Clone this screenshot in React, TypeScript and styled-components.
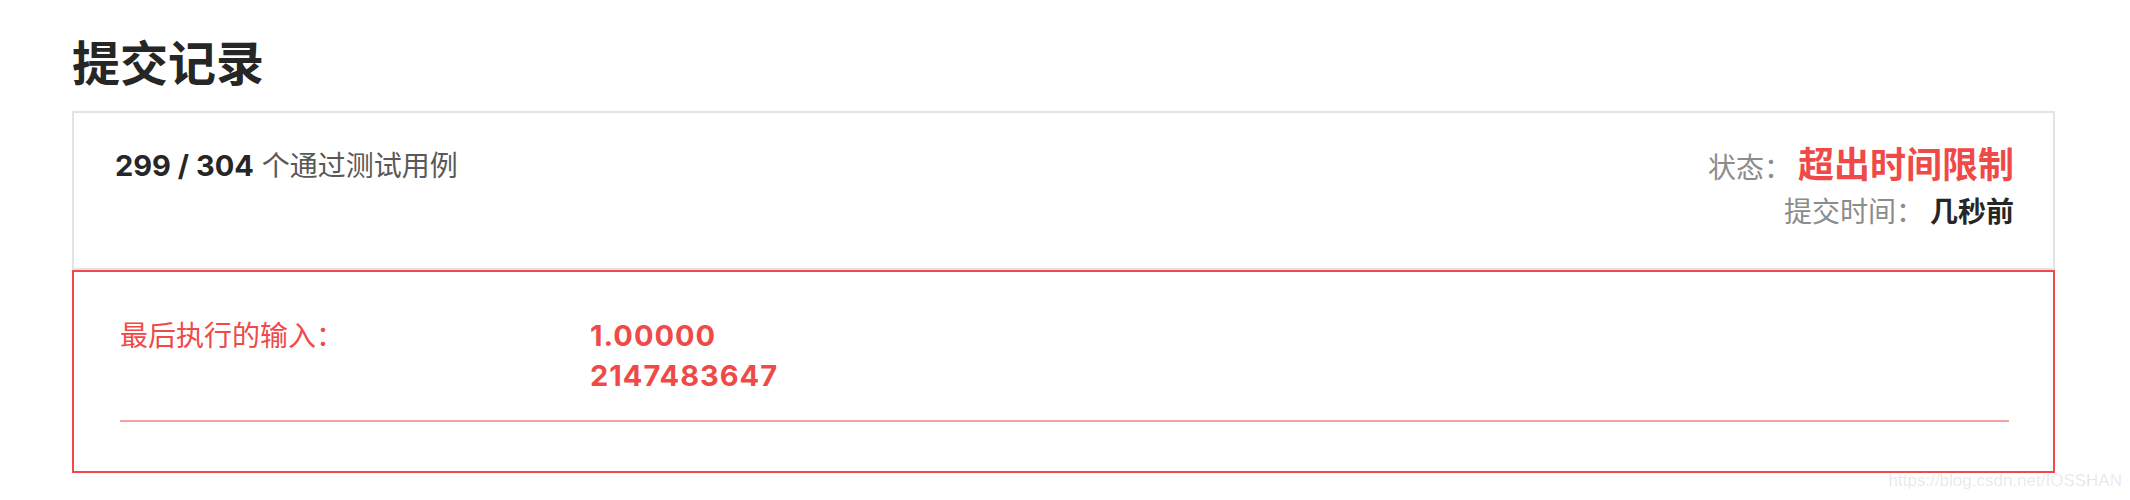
import React from "react";
import styled, { createGlobalStyle } from "styled-components";

const GlobalStyle = createGlobalStyle`
  body {
    margin: 0;
    background: #ffffff;
    font-family: "Inter", "Noto Sans CJK SC", sans-serif;
  }
`;

const RED = "#f04a48";

const App: React.FC = () => {
  return (
    <Page>
      <GlobalStyle />
      <Title>提交记录</Title>
      <SummaryCard>
        <Passed>
          <Count>299 / 304</Count> 个通过测试用例
        </Passed>
        <StatusColumn>
          <StatusLine>
            <Label>状态：</Label>
            <StatusValue>超出时间限制</StatusValue>
          </StatusLine>
          <TimeLine>
            <Label>提交时间：</Label>
            <TimeValue>几秒前</TimeValue>
          </TimeLine>
        </StatusColumn>
      </SummaryCard>
      <ErrorCard>
        <InputRow>
          <InputLabel>最后执行的输入：</InputLabel>
          <InputValues>
            <span>1.00000</span>
            <span>2147483647</span>
          </InputValues>
        </InputRow>
        <Divider />
      </ErrorCard>
      <Watermark>https://blog.csdn.net/IOSSHAN</Watermark>
    </Page>
  );
};

const Page = styled.div`
  position: relative;
  width: 1983px;
  padding: 36px 0 0 72px;
  height: 464px;
`;

const Title = styled.h1`
  margin: 0 0 19px;
  font-size: 48px;
  line-height: 56px;
  font-weight: 700;
  color: #262626;
`;

const SummaryCard = styled.div`
  display: flex;
  justify-content: space-between;
  align-items: flex-start;
  border: 2px solid #e3e3e3;
  padding: 28px 39px 36px 41px;
`;

const Passed = styled.div`
  margin-top: 5px;
  font-size: 28px;
  line-height: 40px;
  color: #595959;
`;

const Count = styled.span`
  font-size: 29px;
  font-weight: 700;
  color: #262626;
`;

const StatusColumn = styled.div`
  display: flex;
  flex-direction: column;
  align-items: flex-end;
`;

const StatusLine = styled.div`
  display: flex;
  align-items: baseline;
  line-height: 48px;
`;

const TimeLine = styled.div`
  display: flex;
  align-items: baseline;
  line-height: 40px;
`;

const Label = styled.span`
  font-size: 28px;
  color: #8c8c8c;
`;

const StatusValue = styled.span`
  margin-left: 6px;
  font-size: 36px;
  font-weight: 700;
  color: ${RED};
`;

const TimeValue = styled.span`
  margin-left: 6px;
  font-size: 28px;
  font-weight: 700;
  color: #262626;
`;

const ErrorCard = styled.div`
  border: 2px solid ${RED};
  padding: 44px 44px 49px 46px;
`;

const InputRow = styled.div`
  display: grid;
  grid-template-columns: 470px 1fr;
  color: ${RED};
`;

const InputLabel = styled.div`
  font-size: 28px;
  line-height: 40px;
`;

const InputValues = styled.div`
  display: flex;
  flex-direction: column;
  font-size: 29px;
  line-height: 40px;
  font-weight: 700;
  letter-spacing: 1px;
`;

const Divider = styled.div`
  margin-top: 24px;
  height: 2px;
  background: #f4a3a3;
`;

const Watermark = styled.div`
  position: absolute;
  right: -67px;
  top: 471px;
  font-family: "Liberation Sans", Arial, sans-serif;
  font-size: 17px;
  color: rgba(0, 0, 0, 0.1);
`;

export default App;
